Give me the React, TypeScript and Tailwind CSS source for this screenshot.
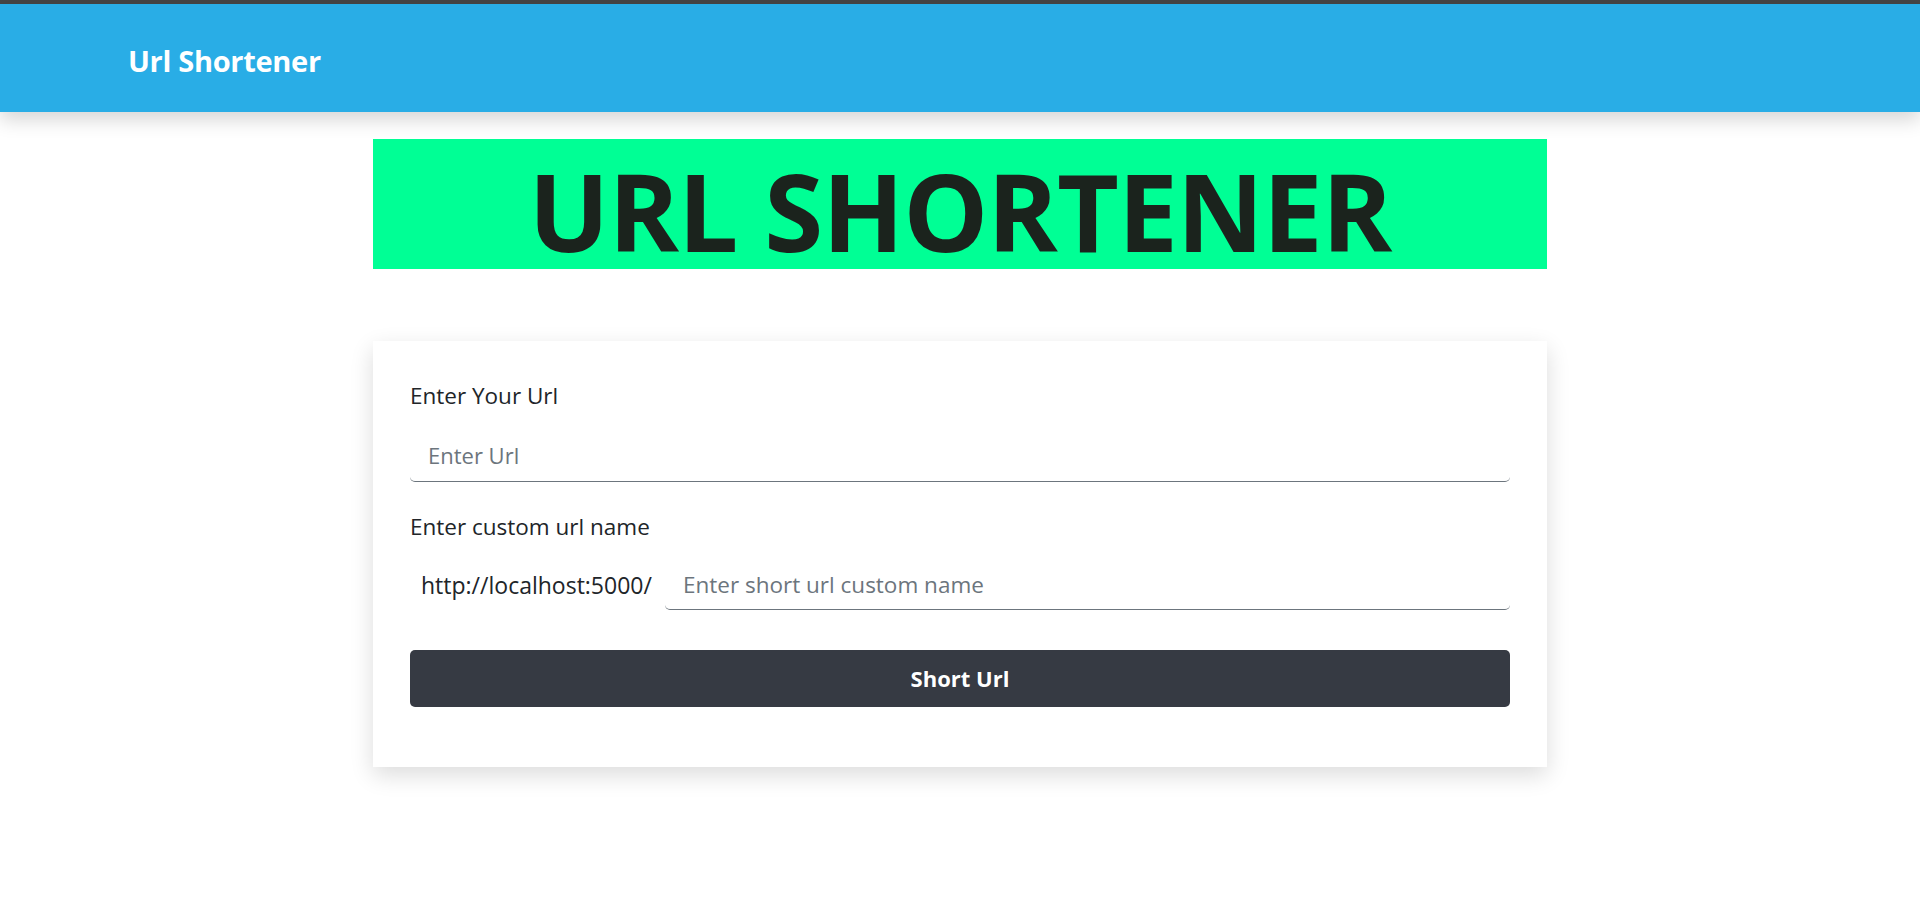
import React from "react";

export default function App() {
  const font = { fontFamily: '"Open Sans", "Noto Sans", sans-serif' };
  return (
    <div className="min-h-[902px] bg-white" style={font}>
      <div className="h-[4px] bg-[#454545]" />
      <nav className="h-[108px] bg-[#29ade6] flex items-center pl-[128px] pt-[4px] shadow-[0_8px_18px_rgba(0,0,0,0.16)] relative z-10">
        <span className="text-white font-bold text-[29px] leading-none tracking-[-0.3px]">Url Shortener</span>
      </nav>
      <main className="w-[1174px] mx-auto pt-[27px]">
        <div className="h-[130px] bg-[#00ff95] flex items-center justify-center pt-[12px]">
          <h1 className="text-[#1b231d] font-bold text-[107px] leading-none tracking-[-1px]">URL SHORTENER</h1>
        </div>
        <div className="mt-[72px] bg-white shadow-[0_8px_22px_rgba(0,0,0,0.14)] px-[37px] pt-[38px] pb-[60px]">
          <label className="block text-[22.5px] leading-[33px] text-[#212529]">Enter Your Url</label>
          <input
            className="mt-[16px] block w-full h-[54px] px-[18px] text-[22px] border-b border-[#6c757d] rounded-b-[5px] outline-none placeholder:text-[#6c757d] bg-white"
            placeholder="Enter Url"
          />
          <label className="mt-[28px] block text-[22.5px] leading-[33px] text-[#212529]">Enter custom url name</label>
          <div className="mt-[17px] flex items-center">
            <span className="text-[23px] leading-[33px] text-[#212529] pl-[11px] pr-[13px] whitespace-nowrap">http://localhost:5000/</span>
            <input
              className="flex-1 h-[50px] px-[18px] text-[22.5px] border-b border-[#6c757d] rounded-b-[5px] outline-none placeholder:text-[#6c757d] bg-white"
              placeholder="Enter short url custom name"
            />
          </div>
          <button className="mt-[40px] w-full h-[57px] bg-[#363a43] rounded-[5px] text-white font-bold text-[22px]">
            Short Url
          </button>
        </div>
      </main>
    </div>
  );
}
